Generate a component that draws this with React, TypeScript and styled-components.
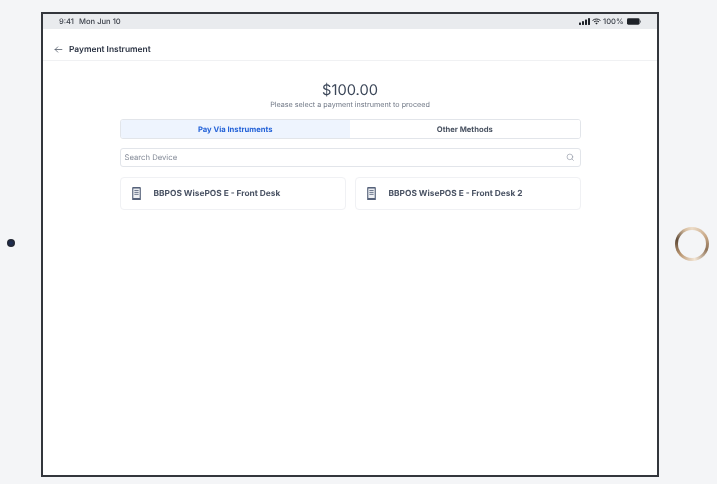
import styled, { createGlobalStyle } from 'styled-components'

const GlobalStyle = createGlobalStyle`
  html, body {
    margin: 0;
    padding: 0;
    background: #f4f5f7;
    font-family: Inter, "Liberation Sans", sans-serif;
    text-rendering: geometricPrecision;
  }
`

// the reference is a scaled down capture, so everything is a little soft
const Stage = styled.div`
  width: 717px;
  height: 484px;
  overflow: hidden;
  display: grid;
  grid-template-columns: 41px 618px 58px;
  padding-top: 12px;
  box-sizing: border-box;
  background: #f4f5f7;
  filter: blur(0.35px);
`

const LeftRail = styled.div`
  height: 465px;
  display: flex;
  align-items: center;
  padding-left: 7px;
  padding-bottom: 3px;
  box-sizing: border-box;
`

const CameraDot = styled.div`
  width: 8px;
  height: 8px;
  border-radius: 50%;
  background: radial-gradient(circle, #1c2f5c 0%, #22252e 70%);
`

const RightRail = styled.div`
  height: 465px;
  display: flex;
  align-items: center;
  padding-left: 16px;
  padding-bottom: 1px;
  box-sizing: border-box;
`

const HomeRing = styled.div`
  width: 34px;
  height: 34px;
  border-radius: 50%;
  box-sizing: border-box;
  padding: 3px;
  background: conic-gradient(#ecdcc8, #c9a988 60deg, #8f7358 110deg, #f3e6d6 170deg, #b8946f 230deg, #5f4b39 285deg, #d9c0a3 335deg, #ecdcc8);
`

const RingHole = styled.div`
  width: 100%;
  height: 100%;
  border-radius: 50%;
  background: #f4f5f7;
`

const Device = styled.div`
  height: 465px;
  box-sizing: border-box;
  border: 2.5px solid #33363c;
  background: #fff;
  display: flex;
  flex-direction: column;
`

const StatusBar = styled.div`
  height: 15px;
  flex: none;
  background: #e9ebee;
  display: flex;
  align-items: center;
  justify-content: space-between;
  padding: 0 16.5px 0 16px;
  font-size: 7.6px;
  font-weight: 500;
  color: #3a3f48;
`

const StatusLeft = styled.div`
  display: flex;
  gap: 5px;
`

const StatusRight = styled.div`
  display: flex;
  align-items: center;
  gap: 2px;
`

const BatteryGap = styled.span`
  margin-right: 1px;
`

const Header = styled.div`
  height: 32px;
  flex: none;
  box-sizing: border-box;
  display: flex;
  align-items: center;
  gap: 6px;
  padding: 10px 0 0 11px;
  border-bottom: 1px solid #f0f1f3;
`

const HeaderTitle = styled.div`
  font-size: 8.4px;
  font-weight: 600;
  color: #283040;
`

const Content = styled.div`
  width: 461px;
  margin-left: 76.5px;
  padding-top: 20px;
  display: flex;
  flex-direction: column;
`

const Amount = styled.div`
  text-align: center;
  font-size: 14.7px;
  line-height: 19px;
  font-weight: 400;
  color: #3b4658;
`

const Subtitle = styled.div`
  text-align: center;
  font-size: 7.2px;
  line-height: 10px;
  color: #6f7785;
  margin-bottom: 9px;
`

const Tabs = styled.div`
  height: 20px;
  box-sizing: border-box;
  display: grid;
  grid-template-columns: 229.5px 1fr;
  border: 1px solid #e2e5ea;
  border-radius: 3px;
  overflow: hidden;
  margin-bottom: 9px;
`

const Tab = styled.div<{ $active?: boolean }>`
  display: flex;
  align-items: center;
  justify-content: center;
  font-size: 7.65px;
  font-weight: 650;
  background: ${({ $active }) => ($active ? '#eef4fe' : '#fff')};
  color: ${({ $active }) => ($active ? '#2563d8' : '#4a5362')};
`

const SearchBox = styled.div`
  height: 19px;
  box-sizing: border-box;
  display: flex;
  align-items: center;
  justify-content: space-between;
  padding: 0 5px 0 4px;
  border: 1px solid #e2e5ea;
  border-radius: 3px;
  font-size: 7.7px;
  color: #838a97;
  margin-bottom: 10px;
`

const DeviceGrid = styled.div`
  display: grid;
  grid-template-columns: 1fr 1fr;
  gap: 9px;
`

const DeviceCard = styled.div`
  height: 33px;
  box-sizing: border-box;
  display: flex;
  align-items: center;
  gap: 12.5px;
  padding-left: 11.5px;
  border: 1px solid #f0f1f4;
  border-radius: 4px;
  font-size: 8.35px;
  font-weight: 650;
  color: #4a5364;
`

const BackArrow = () => (
  <svg width="9" height="9" viewBox="0 0 24 24" fill="none" stroke="#4a5362" strokeWidth="2" strokeLinecap="round" strokeLinejoin="round">
    <path d="M21 12H3M10 5l-7 7 7 7" />
  </svg>
)

const SignalIcon = () => (
  <svg width="11" height="7" viewBox="0 0 11 7" fill="#1f2329">
    <rect x="0" y="4.5" width="2" height="2.5" rx="0.4" />
    <rect x="3" y="3" width="2" height="4" rx="0.4" />
    <rect x="6" y="1.5" width="2" height="5.5" rx="0.4" />
    <rect x="9" y="0" width="2" height="7" rx="0.4" />
  </svg>
)

const WifiIcon = () => (
  <svg width="9" height="7" viewBox="0 0 10 7" fill="none" stroke="#1f2329" strokeWidth="1.1">
    <path d="M0.6 2.4C3 0.2 7 0.2 9.4 2.4" />
    <path d="M2.2 4C3.7 2.7 6.3 2.7 7.8 4" />
    <path d="M3.7 5.4C4.4 4.9 5.6 4.9 6.3 5.4L5 6.8Z" fill="#1f2329" stroke="none" />
  </svg>
)

const BatteryIcon = () => (
  <svg width="14" height="7" viewBox="0 0 15 7">
    <rect x="0" y="0" width="13.5" height="7" rx="1.5" fill="#1f2329" />
    <rect x="14" y="2.2" width="1" height="2.6" rx="0.4" fill="#6b6f76" />
  </svg>
)

const SearchIcon = () => (
  <svg width="8.5" height="8.5" viewBox="0 0 24 24" fill="none" stroke="#8f96a3" strokeWidth="1.8" strokeLinecap="round">
    <circle cx="11" cy="11" r="8" />
    <path d="M21 21l-4.3-4.3" />
  </svg>
)

const TerminalIcon = () => (
  <svg width="9" height="13.5" viewBox="0 0 9 14" fill="none">
    <rect x="0" y="0" width="9" height="14" rx="1" fill="#56627a" />
    <rect x="1.2" y="1.6" width="6.6" height="9.8" fill="#eef0f3" />
    <path d="M2.3 3.6h4.4M2.3 5.6h4.4M2.3 7.6h4.4" stroke="#56627a" strokeWidth="0.9" />
  </svg>
)

const devices = ['BBPOS WisePOS E - Front Desk', 'BBPOS WisePOS E - Front Desk 2']

export default function App() {
  return (
    <>
      <GlobalStyle />
      <Stage>
        <LeftRail>
          <CameraDot />
        </LeftRail>
        <Device>
          <StatusBar>
            <StatusLeft>
              <span>9:41</span>
              <span>Mon Jun 10</span>
            </StatusLeft>
            <StatusRight>
              <SignalIcon />
              <WifiIcon />
              <BatteryGap>100%</BatteryGap>
              <BatteryIcon />
            </StatusRight>
          </StatusBar>
          <Header>
            <BackArrow />
            <HeaderTitle>Payment Instrument</HeaderTitle>
          </Header>
          <Content>
            <Amount>$100.00</Amount>
            <Subtitle>Please select a payment instrument to proceed</Subtitle>
            <Tabs>
              <Tab $active>Pay Via Instruments</Tab>
              <Tab>Other Methods</Tab>
            </Tabs>
            <SearchBox>
              <span>Search Device</span>
              <SearchIcon />
            </SearchBox>
            <DeviceGrid>
              {devices.map((name) => (
                <DeviceCard key={name}>
                  <TerminalIcon />
                  <span>{name}</span>
                </DeviceCard>
              ))}
            </DeviceGrid>
          </Content>
        </Device>
        <RightRail>
          <HomeRing>
            <RingHole />
          </HomeRing>
        </RightRail>
      </Stage>
    </>
  )
}
